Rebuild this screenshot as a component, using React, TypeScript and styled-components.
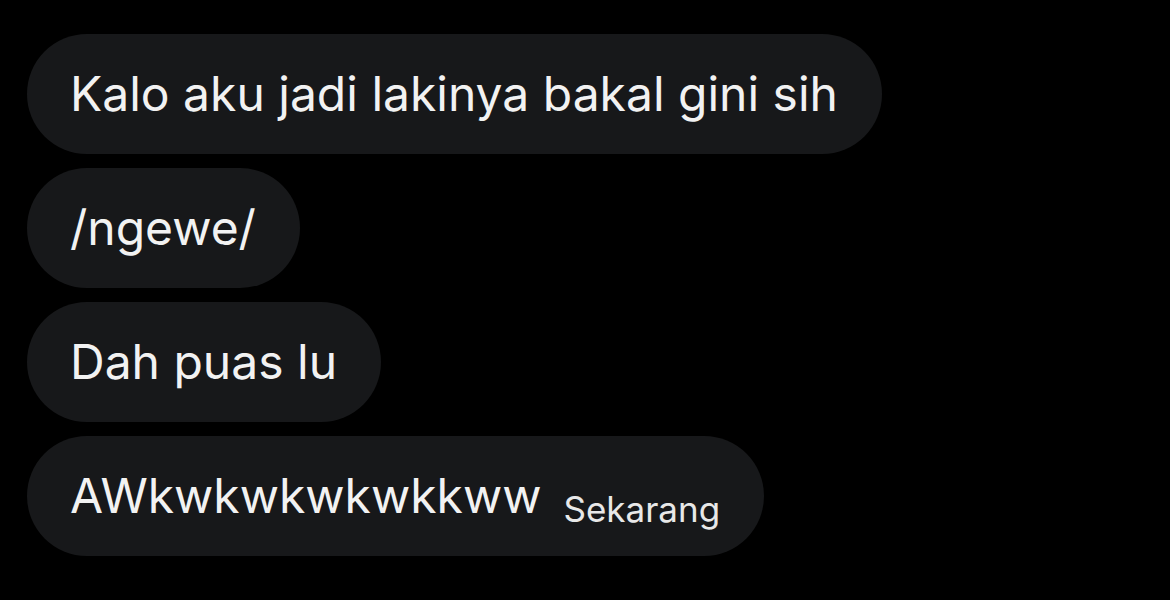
import React from "react";
import styled, { createGlobalStyle } from "styled-components";

const GlobalStyle = createGlobalStyle`
  html, body {
    margin: 0;
    padding: 0;
    background: #000000;
  }
  body {
    font-family: Inter, "Noto Sans", "Liberation Sans", sans-serif;
  }
`;

const Thread = styled.div`
  display: flex;
  flex-direction: column;
  align-items: flex-start;
  gap: 14px;
  padding: 34px 0 0 27px;
  width: 1170px;
  height: 600px;
  box-sizing: border-box;
  background: #000000;
`;

const Bubble = styled.div`
  display: flex;
  align-items: center;
  height: 120px;
  box-sizing: border-box;
  padding: 0 44px 0 43px;
  border-radius: 60px;
  background: #17181a;
  color: #f2f2f2;
`;

const MessageText = styled.span`
  font-size: 48px;
  line-height: 1;
  font-weight: 400;
  white-space: nowrap;
`;

const Time = styled.span`
  font-size: 35px;
  line-height: 1;
  margin-left: 22px;
  margin-top: 26px;
  color: #e8e8e8;
  white-space: nowrap;
`;

export default function App() {
  return (
    <>
      <GlobalStyle />
      <Thread>
        <Bubble>
          <MessageText>Kalo aku jadi lakinya bakal gini sih</MessageText>
        </Bubble>
        <Bubble>
          <MessageText>/ngewe/</MessageText>
        </Bubble>
        <Bubble>
          <MessageText>Dah puas lu</MessageText>
        </Bubble>
        <Bubble>
          <MessageText>AWkwkwkwkwkkww</MessageText>
          <Time>Sekarang</Time>
        </Bubble>
      </Thread>
    </>
  );
}
